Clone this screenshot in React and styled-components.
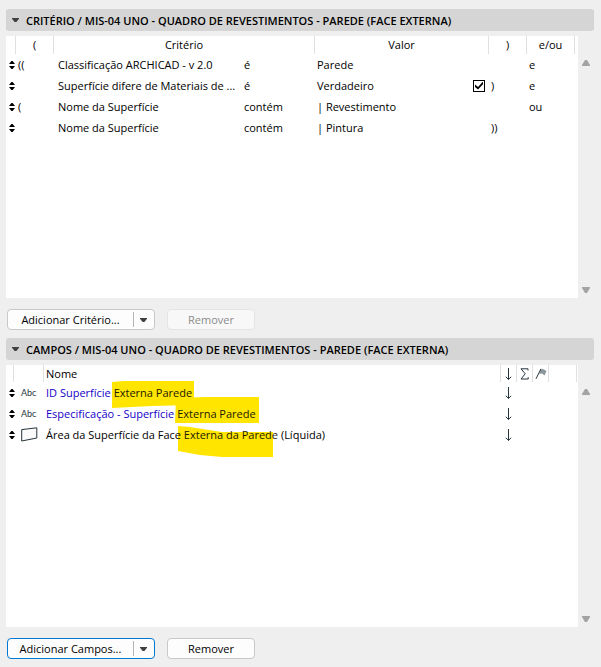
import React, { useState } from 'react';
import styled, { createGlobalStyle } from 'styled-components';

const criteria = [
  { open: '((', name: 'Classificação ARCHICAD - v 2.0', op: 'é', value: 'Parede', close: '', join: 'e' },
  { open: '', name: 'Superfície difere de Materiais de ...', op: 'é', value: 'Verdadeiro', check: true, close: ')', join: 'e' },
  { open: '(', name: 'Nome da Superfície', op: 'contém', value: '| Revestimento', close: '', join: 'ou' },
  { open: '', name: 'Nome da Superfície', op: 'contém', value: '| Pintura', close: '))', join: '' },
];

// blob is the marker stroke behind the highlighted words
const fields = [
  {
    type: 'text',
    before: 'ID Superfície',
    marked: 'Externa Parede',
    after: '',
    blob: { x: -2, y: -4, w: 82, h: 27, d: 'M0 1 L12 0 L82 0 L82 24 L40 25 L0 27 Z' },
  },
  {
    type: 'text',
    before: 'Especificação - Superfície',
    marked: 'Externa Parede',
    after: '',
    blob: { x: -2, y: -9, w: 84, h: 26, d: 'M1 1 L30 0 L84 0 L84 26 L0 26 Z' },
  },
  {
    type: 'area',
    before: 'Área da Superfície da Face',
    marked: 'Externa da Parede',
    after: ' (Líquida)',
    blob: { x: -6, y: -1, w: 95, h: 32, d: 'M0 0 L12 1 L44 6 L95 6 L95 31 L44 31 L22 29 L0 25 Z' },
  },
];

const Handle = () => (
  <Icon width="6" height="8" viewBox="0 0 6 8">
    <path d="M2.4 0 H3.6 L6 3 H0 Z M2.4 8 H3.6 L6 5 H0 Z" fill="#000" />
  </Icon>
);

const SortArrow = () => (
  <Icon width="7" height="12" viewBox="0 0 7 12" fill="none" stroke="#26343c">
    <path d="M3.5 0 V11.5 M0.8 8.8 L3.5 11.4 L6.2 8.8" />
  </Icon>
);

const Sigma = () => (
  <Icon width="9" height="12" viewBox="0 0 9 12" fill="none" stroke="#26343c">
    <path d="M8 2.5 V0.8 H1 L5.2 5.8 L1 11 H8.2 V9.2" />
  </Icon>
);

const Flag = () => (
  <Icon width="12" height="12" viewBox="0 0 12 12" fill="none">
    <path d="M5.5 1.5 L8 1 L11.5 3 L9.5 7.5 L7 5.5 L4.5 6 Z" fill="#8d969b" />
    <path d="M6 0.8 L1 10.8" stroke="#26343c" />
  </Icon>
);

const AreaIcon = () => (
  <Icon width="17" height="15" viewBox="0 0 17 15" fill="#fafafa" stroke="#26343c">
    <path d="M0.7 2.6 L15.8 0.8 V11 L0.7 14 Z" />
  </Icon>
);

const Triangle = ({ up, color, width = 8, height = 6 }) => (
  <Icon width={width} height={height} viewBox="0 0 8 6" preserveAspectRatio="none">
    <path d={up ? 'M3 0 H5 L8 5 V6 H0 V5 Z' : 'M3 6 H5 L8 1 V0 H0 V1 Z'} fill={color} />
  </Icon>
);

const Highlight = ({ blob, children }) => (
  <Mark>
    <Blob $x={blob.x} $y={blob.y} width={blob.w} height={blob.h} aria-hidden="true">
      <path d={blob.d} fill="#ffe500" />
    </Blob>
    {children}
  </Mark>
);

const Panel = ({ title, children }) => {
  const [open, setOpen] = useState(true);
  return (
    <>
      <PanelTitle type="button" aria-expanded={open} onClick={() => setOpen(!open)}>
        <Triangle color="#404040" width={7} height={4} />
        {title}
      </PanelTitle>
      <PanelBody>
        <List>{open && children}</List>
        <Scroll>
          <Triangle up color="#a3a3a3" />
          <Triangle color="#a3a3a3" />
        </Scroll>
      </PanelBody>
    </>
  );
};

const Actions = ({ label, active, removable }) => (
  <ButtonRow>
    <Split $active={active}>
      <SplitMain type="button">{label}</SplitMain>
      <SplitMenu type="button" aria-label="Mais opções">
        <Triangle color="#404040" width={7} height={4} />
      </SplitMenu>
    </Split>
    <Remove type="button" disabled={!removable}>
      Remover
    </Remove>
  </ButtonRow>
);

const App = () => {
  const [checked, setChecked] = useState(true);

  return (
    <Page>
      <GlobalStyle />
      <Panel title="CRITÉRIO / MIS-04 UNO - QUADRO DE REVESTIMENTOS - PAREDE (FACE EXTERNA)">
        <Table>
          <colgroup>
            <Col $w={10} />
            <Col $w={38} />
            <Col />
            <Col $w={74} />
            <Col $w={174} />
            <Col $w={38} />
            <Col $w={48} />
            <Col $w={3} />
          </colgroup>
          <thead>
            <HeadRow $h={18}>
              <Th />
              <Th>(</Th>
              <Th colSpan={2}>Critério</Th>
              <Th>Valor</Th>
              <Th>)</Th>
              <Th>e/ou</Th>
              <td />
            </HeadRow>
          </thead>
          <tbody>
            {criteria.map((c, i) => (
              <Row key={i}>
                <Td $pad={3}><Handle /></Td>
                <Td $pad={2}>{c.open}</Td>
                <Td $pad={4} $clip>{c.name}</Td>
                <Td $pad={3}>{c.op}</Td>
                <Td $pad={2}>
                  <Value>
                    {c.value}
                    {c.check && (
                      <Check
                        type="checkbox"
                        aria-label={c.value}
                        checked={checked}
                        onChange={(e) => setChecked(e.target.checked)}
                      />
                    )}
                  </Value>
                </Td>
                <Td $pad={2}>{c.close}</Td>
                <Td $pad={2}>{c.join}</Td>
                <td />
              </Row>
            ))}
          </tbody>
        </Table>
      </Panel>
      <Actions label="Adicionar Critério..." />

      <Panel title="CAMPOS / MIS-04 UNO - QUADRO DE REVESTIMENTOS - PAREDE (FACE EXTERNA)">
        <Table>
          <colgroup>
            <Col $w={8} />
            <Col $w={30} />
            <Col />
            <Col $w={16} />
            <Col $w={16} />
            <Col $w={16} />
            <Col $w={28} />
            <Col $w={1} />
          </colgroup>
          <thead>
            <HeadRow $h={17}>
              <Th />
              <Th />
              <Th $left>Nome</Th>
              <Th><SortArrow /></Th>
              <Th><Sigma /></Th>
              <Th><Flag /></Th>
              <Th />
              <td />
            </HeadRow>
          </thead>
          <tbody>
            {fields.map((f) => (
              <Row key={f.before}>
                <Td $pad={3}><Handle /></Td>
                <Td $pad={7}>{f.type === 'text' ? <Abc>Abc</Abc> : <AreaIcon />}</Td>
                <Td $pad={2}>
                  <FieldName $link={f.type === 'text'}>{f.before}</FieldName>{' '}
                  <Highlight blob={f.blob}>{f.marked}</Highlight>
                  {f.after}
                </Td>
                <Td $center><SortArrow /></Td>
                <td colSpan={4} />
              </Row>
            ))}
          </tbody>
        </Table>
      </Panel>
      <Actions label="Adicionar Campos..." active removable />
    </Page>
  );
};

const GlobalStyle = createGlobalStyle`
  * {
    box-sizing: border-box;
  }
  body {
    margin: 0;
    background: #efefef;
  }
  body, button {
    font-family: 'Open Sans', 'Noto Sans', sans-serif;
    font-size: 11px;
    color: #000;
  }
`;

const Page = styled.main`
  display: flex;
  flex-direction: column;
  min-height: 100vh;
  padding: 9px 7px 0 6px;
`;

const Icon = styled.svg`
  display: block;
  flex: none;
`;

const PanelTitle = styled.button`
  display: flex;
  align-items: center;
  gap: 7px;
  height: 22px;
  padding: 0 6px;
  border: none;
  border-radius: 3px;
  background: #d5d5d5;
  font-weight: 600;
  white-space: nowrap;
`;

const PanelBody = styled.div`
  display: flex;
  flex: 1 1 0px;
  min-height: 120px;
  margin-top: 5px;
`;

const List = styled.div`
  flex: 1;
  min-width: 0;
  background: #fff;
  isolation: isolate;
`;

const Scroll = styled.div`
  display: flex;
  flex-direction: column;
  align-items: center;
  justify-content: space-between;
  width: 16px;
  padding: 24px 0 5px;
`;

const Table = styled.table`
  width: 100%;
  table-layout: fixed;
  border-collapse: separate;
  border-spacing: 0;

  td, th {
    padding: 0;
  }
`;

const Col = styled.col`
  width: ${(p) => (p.$w ? `${p.$w}px` : 'auto')};
`;

const HeadRow = styled.tr`
  height: ${(p) => p.$h}px;
  line-height: ${(p) => p.$h}px;
`;

const Th = styled.th`
  border-right: 1px solid #e0e0e0;
  font-weight: 400;
  text-align: ${(p) => (p.$left ? 'left' : 'center')};

  && {
    padding-left: ${(p) => (p.$left ? 2 : 0)}px;
  }
  svg {
    margin: 0 auto;
  }
`;

const Row = styled.tr`
  height: 21px;
`;

const Td = styled.td`
  line-height: 21px;
  white-space: nowrap;
  overflow: ${(p) => (p.$clip ? 'hidden' : 'visible')};
  text-overflow: ellipsis;

  && {
    padding-left: ${(p) => p.$pad || 0}px;
    padding-right: ${(p) => (p.$center ? 1 : 0)}px;
  }
  svg {
    margin: ${(p) => (p.$center ? '0 auto' : '0')};
  }
`;

const Value = styled.div`
  display: flex;
  align-items: center;
  justify-content: space-between;
  padding-right: 4px;
`;

const Check = styled.input`
  appearance: none;
  width: 12px;
  height: 12px;
  margin: 0;
  border: 1px solid #000;
  background: #fff;

  &:checked::before {
    content: '';
    display: block;
    width: 8px;
    height: 8px;
    margin: 1px;
    background: #000;
    clip-path: polygon(0 38%, 38% 68%, 100% 0, 100% 35%, 38% 100%, 0 70%);
  }
`;

const Abc = styled.span`
  display: block;
  font-family: Lato, sans-serif;
  font-size: 9px;
  color: #26343c;
`;

const FieldName = styled.span`
  color: ${(p) => (p.$link ? '#1400c8' : '#000')};
`;

const Mark = styled.mark`
  position: relative;
  background: none;
  color: #1c1900;
`;

const Blob = styled.svg`
  position: absolute;
  left: ${(p) => p.$x}px;
  top: ${(p) => p.$y}px;
  z-index: -1;
`;

const ButtonRow = styled.div`
  display: flex;
  gap: 12px;
  padding: 11px 1px 8px;
`;

const Split = styled.div`
  display: flex;
  align-items: center;
  width: 148px;
  height: 21px;
  border: 1px solid ${(p) => (p.$active ? '#0078d4' : '#c8c8c8')};
  border-radius: 4px;
  background: #fdfdfd;
`;

const SplitMain = styled.button`
  flex: 1;
  height: 15px;
  padding: 0;
  border: none;
  border-right: 1px solid #b4b4b4;
  background: none;
  line-height: 15px;
`;

const SplitMenu = styled.button`
  display: flex;
  align-items: center;
  justify-content: center;
  width: 20px;
  height: 15px;
  padding: 0 2px 0 0;
  border: none;
  background: none;
`;

const Remove = styled.button`
  width: 88px;
  height: 21px;
  padding: 0;
  border: 1px solid #c8c8c8;
  border-radius: 4px;
  background: #fdfdfd;

  &:disabled {
    border-color: #e4e4e4;
    background: #f8f8f8;
    color: #8c8c8c;
  }
`;

export default App;
